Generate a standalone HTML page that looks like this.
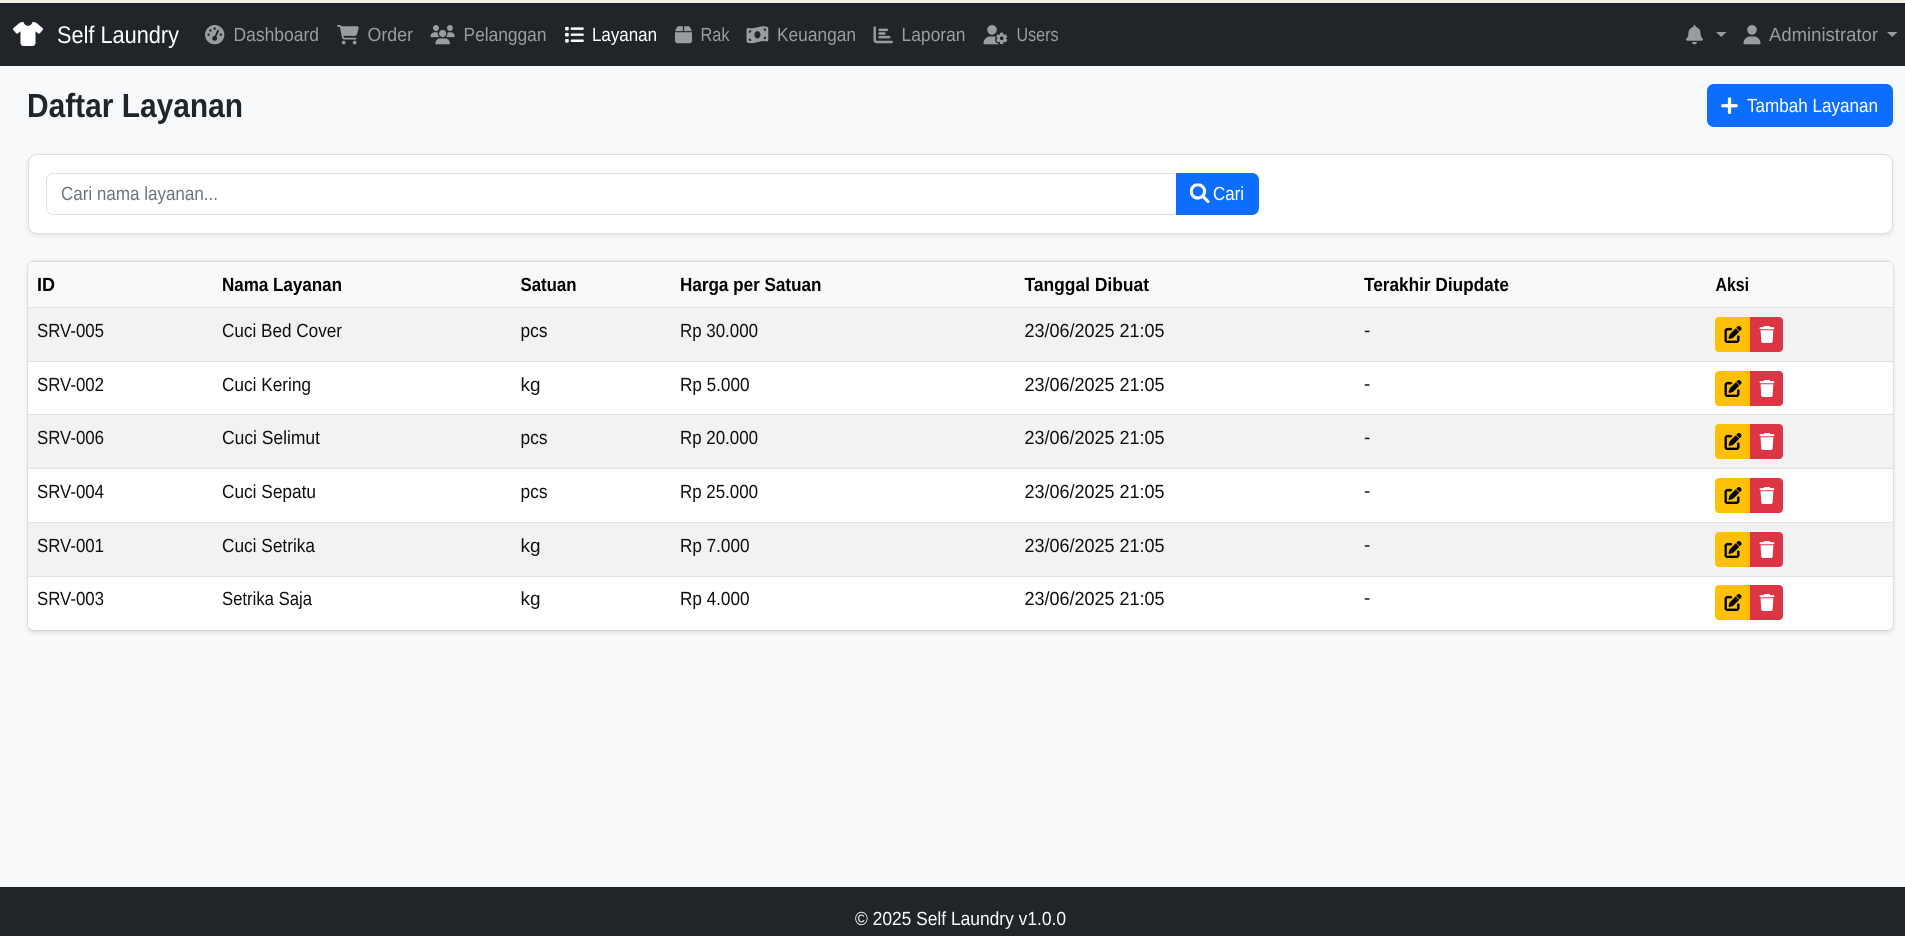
<!DOCTYPE html>
<html lang="id">
<head>
<meta charset="utf-8">
<title>Daftar Layanan - Self Laundry</title>
<style>
html,body{margin:0;padding:0;width:1905px;height:936px;overflow:hidden;background:#f8f9fa}
.b{position:absolute;box-sizing:border-box}
svg.o{position:absolute;left:0;top:0;width:1905px;height:936px}
svg text{font-family:"Liberation Sans",sans-serif;font-size:19px;fill:#0d0f11;text-rendering:geometricPrecision}
.n{fill:#9a9c9e}
.w{fill:#fff}
.th{font-weight:700;fill:#000}
.i{fill:#9a9c9e}
</style>
</head>
<body>
<div class="b" style="left:0;top:0;width:1905px;height:3px;background:#eff0e2"></div>
<div class="b" style="left:0;top:3px;width:1905px;height:63px;background:#212529"></div>

<div class="b" style="left:1707px;top:84px;width:186px;height:43px;background:#0d6efd;border-radius:7px"></div>

<div class="b" style="left:28px;top:154px;width:1865px;height:80px;background:#fff;border:1px solid #dcdfe2;border-radius:9px;box-shadow:0 2px 5px rgba(0,0,0,.09)"></div>
<div class="b" style="left:46px;top:173px;width:1131px;height:42px;background:#fff;border:1px solid #dee2e6;border-radius:7px 0 0 7px"></div>
<div class="b" style="left:1176px;top:173px;width:83px;height:42px;background:#0d6efd;border-radius:0 7px 7px 0"></div>

<div class="b" style="left:28px;top:261px;width:1865px;height:369px;background:#fff;border-radius:6px;box-shadow:0 2px 5px rgba(0,0,0,.14),0 0 1px rgba(0,0,0,.3);overflow:hidden">
  <div class="b" style="left:0;top:0;width:1865px;height:47px;background:#f8f9fa;border-top:1px solid #d9dcdf;border-bottom:1px solid #dee2e6"></div>
  <div class="b" style="left:0;top:47px;width:1865px;height:54px;background:#f2f2f2;border-bottom:1px solid #dee2e6"></div>
  <div class="b" style="left:0;top:101px;width:1865px;height:53px;background:#fff;border-bottom:1px solid #dee2e6"></div>
  <div class="b" style="left:0;top:154px;width:1865px;height:54px;background:#f2f2f2;border-bottom:1px solid #dee2e6"></div>
  <div class="b" style="left:0;top:208px;width:1865px;height:54px;background:#fff;border-bottom:1px solid #dee2e6"></div>
  <div class="b" style="left:0;top:262px;width:1865px;height:54px;background:#f2f2f2;border-bottom:1px solid #dee2e6"></div>
  <div class="b" style="left:0;top:316px;width:1865px;height:53px;background:#fff"></div>
</div>

<div class="b" style="left:1715px;top:317px;width:35px;height:35px;background:#ffc107;border-radius:4px 0 0 4px"></div><div class="b" style="left:1750px;top:317px;width:33px;height:35px;background:#dc3545;border-radius:0 4px 4px 0"></div>
<div class="b" style="left:1715px;top:371px;width:35px;height:35px;background:#ffc107;border-radius:4px 0 0 4px"></div><div class="b" style="left:1750px;top:371px;width:33px;height:35px;background:#dc3545;border-radius:0 4px 4px 0"></div>
<div class="b" style="left:1715px;top:424px;width:35px;height:35px;background:#ffc107;border-radius:4px 0 0 4px"></div><div class="b" style="left:1750px;top:424px;width:33px;height:35px;background:#dc3545;border-radius:0 4px 4px 0"></div>
<div class="b" style="left:1715px;top:478px;width:35px;height:35px;background:#ffc107;border-radius:4px 0 0 4px"></div><div class="b" style="left:1750px;top:478px;width:33px;height:35px;background:#dc3545;border-radius:0 4px 4px 0"></div>
<div class="b" style="left:1715px;top:532px;width:35px;height:35px;background:#ffc107;border-radius:4px 0 0 4px"></div><div class="b" style="left:1750px;top:532px;width:33px;height:35px;background:#dc3545;border-radius:0 4px 4px 0"></div>
<div class="b" style="left:1715px;top:585px;width:35px;height:35px;background:#ffc107;border-radius:4px 0 0 4px"></div><div class="b" style="left:1750px;top:585px;width:33px;height:35px;background:#dc3545;border-radius:0 4px 4px 0"></div>

<div class="b" style="left:0;top:887px;width:1905px;height:49px;background:#212529"></div>

<svg class="o" viewBox="0 0 1905 936" xmlns="http://www.w3.org/2000/svg">
<defs>
<symbol id="edit" viewBox="0 0 512 512"><path stroke="#000" stroke-width="14" d="M471.6 21.7c-21.9-21.9-57.3-21.9-79.2 0L362.3 51.7l97.9 97.9 30.1-30.1c21.9-21.9 21.9-57.3 0-79.2L471.6 21.7zm-299.2 220c-6.1 6.1-10.8 13.6-13.5 21.9l-29.6 88.8c-2.9 8.6-.6 18.1 5.8 24.6s15.9 8.7 24.6 5.8l88.8-29.6c8.2-2.7 15.7-7.4 21.9-13.5L437.7 172.3 339.7 74.3 172.4 241.7zM96 64C43 64 0 107 0 160V416c0 53 43 96 96 96H352c53 0 96-43 96-96V320c0-17.7-14.3-32-32-32s-32 14.3-32 32v96c0 17.7-14.3 32-32 32H96c-17.7 0-32-14.3-32-32V160c0-17.7 14.3-32 32-32h96c17.7 0 32-14.3 32-32s-14.3-32-32-32H96z"/></symbol>
<symbol id="trash" viewBox="0 0 448 512"><path fill="#fff" d="M135.2 17.7L128 32H32C14.3 32 0 46.3 0 64S14.3 96 32 96H416c17.7 0 32-14.3 32-32s-14.3-32-32-32H320l-7.2-14.3C307.4 6.8 296.3 0 284.2 0H163.8c-12.1 0-23.2 6.8-28.6 17.7zM416 128H32L53.2 467c1.6 25.3 22.6 45 47.9 45H346.9c25.3 0 46.3-19.7 47.9-45L416 128z"/></symbol>
</defs>

<!-- brand -->
<svg x="13" y="22" width="30" height="24" viewBox="0 0 640 512"><path fill="#fff" d="M211.8 0c7.8 0 14.3 5.7 16.7 13.2C240.8 51.9 277.1 80 320 80s79.2-28.1 91.5-66.8C413.9 5.7 420.4 0 428.2 0h12.6c22.5 0 44.2 7.9 61.5 22.3L628.5 127.4c6.6 5.5 10.7 13.5 11.4 22.1s-2.1 17.1-7.8 23.6l-56 64c-11.4 13.1-31.2 14.6-44.6 3.5L480 197.7V448c0 35.3-28.7 64-64 64H224c-35.3 0-64-28.7-64-64V197.7l-51.5 42.9c-13.3 11.1-33.1 9.6-44.6-3.5l-56-64c-5.7-6.5-8.5-15-7.8-23.6s4.8-16.6 11.4-22.1L137.7 22.3C155 7.9 176.7 0 199.2 0h12.6z"/></svg>
<text x="57" y="43" class="w" style="font-size:24px" textLength="122" lengthAdjust="spacingAndGlyphs">Self Laundry</text>

<!-- nav icons -->
<svg x="205" y="25" width="19.4" height="19.4" viewBox="0 0 512 512"><path class="i" d="M0 256a256 256 0 1 1 512 0A256 256 0 1 1 0 256zM288 96a32 32 0 1 0 -64 0 32 32 0 1 0 64 0zM256 416c35.3 0 64-28.7 64-64c0-17.4-6.9-33.1-18.1-44.6L366 161.7c5.3-12.1-.2-26.3-12.3-31.6s-26.3 .2-31.6 12.3L257.9 288c-.6 0-1.3 0-1.9 0c-35.3 0-64 28.7-64 64s28.7 64 64 64zM176 144a32 32 0 1 0 -64 0 32 32 0 1 0 64 0zM96 288a32 32 0 1 0 0-64 32 32 0 1 0 0 64zm352-32a32 32 0 1 0 -64 0 32 32 0 1 0 64 0z"/></svg>
<svg x="337" y="25" width="21.9" height="19.4" viewBox="0 0 576 512"><path class="i" d="M0 24C0 10.7 10.7 0 24 0H69.5c22 0 41.5 12.8 50.6 32h411c26.3 0 45.5 25 38.6 50.4l-41 152.3c-8.5 31.4-37 53.3-69.5 53.3H170.7l5.4 28.5c2.2 11.3 12.1 19.5 23.6 19.5H488c13.3 0 24 10.7 24 24s-10.7 24-24 24H199.7c-34.6 0-64.3-24.6-70.7-58.5L77.4 54.5c-.7-3.8-4-6.5-7.9-6.5H24C10.7 48 0 37.3 0 24zM128 464a48 48 0 1 1 96 0 48 48 0 1 1 -96 0zm336-48a48 48 0 1 1 0 96 48 48 0 1 1 0-96z"/></svg>
<svg x="430.5" y="25" width="24.3" height="19.4" viewBox="0 0 640 512"><path class="i" d="M144 0a80 80 0 1 1 0 160A80 80 0 1 1 144 0zM512 0a80 80 0 1 1 0 160A80 80 0 1 1 512 0zM0 298.7C0 239.8 47.8 192 106.7 192h42.7c15.9 0 31 3.5 44.6 9.7c-1.3 7.2-1.9 14.7-1.9 22.3c0 38.2 16.8 72.5 43.3 96c-.2 0-.4 0-.7 0H21.3C9.6 320 0 310.4 0 298.7zM405.3 320c-.2 0-.4 0-.7 0c26.6-23.5 43.3-57.8 43.3-96c0-7.6-.7-15-1.9-22.3c13.6-6.3 28.7-9.7 44.6-9.7h42.7C592.2 192 640 239.8 640 298.7c0 11.8-9.6 21.3-21.3 21.3H405.3zM224 224a96 96 0 1 1 192 0 96 96 0 1 1 -192 0zM128 485.3C128 411.7 187.7 352 261.3 352H378.7C452.3 352 512 411.7 512 485.3c0 14.7-11.9 26.7-26.7 26.7H154.7c-14.7 0-26.7-11.9-26.7-26.7z"/></svg>
<svg x="564.5" y="25" width="19.4" height="19.4" viewBox="0 0 512 512"><path fill="#fff" d="M40 48C26.7 48 16 58.7 16 72v48c0 13.3 10.7 24 24 24H88c13.3 0 24-10.7 24-24V72c0-13.3-10.7-24-24-24H40zM192 64c-17.7 0-32 14.3-32 32s14.3 32 32 32H480c17.7 0 32-14.3 32-32s-14.3-32-32-32H192zm0 160c-17.7 0-32 14.3-32 32s14.3 32 32 32H480c17.7 0 32-14.3 32-32s-14.3-32-32-32H192zm0 160c-17.7 0-32 14.3-32 32s14.3 32 32 32H480c17.7 0 32-14.3 32-32s-14.3-32-32-32H192zM16 232v48c0 13.3 10.7 24 24 24H88c13.3 0 24-10.7 24-24V232c0-13.3-10.7-24-24-24H40c-13.3 0-24 10.7-24 24zM40 368c-13.3 0-24 10.7-24 24v48c0 13.3 10.7 24 24 24H88c13.3 0 24-10.7 24-24V392c0-13.3-10.7-24-24-24H40z"/></svg>
<svg x="675" y="25" width="17" height="19.4" viewBox="0 0 448 512"><path class="i" d="M50.7 58.5L0 160H208V32H93.7C75.5 32 58.9 42.3 50.7 58.5zM240 160H448L397.3 58.5C389.1 42.3 372.5 32 354.3 32H240V160zm208 32H0V416c0 35.3 28.7 64 64 64H384c35.3 0 64-28.7 64-64V192z"/></svg>
<svg x="746.5" y="25" width="21.9" height="19.4" viewBox="0 0 576 512"><path class="i" d="M0 112.5V422.3c0 18 10.1 35 27 41.3c87 32.5 174 10.3 261-11.9c79.8-20.3 159.6-40.7 239.3-18.9c23 6.3 48.7-9.5 48.7-33.4V89.7c0-18-10.1-35-27-41.3C462 15.9 375 38.1 288 60.3C208.2 80.6 128.4 100.9 48.7 79.1C25.6 72.8 0 88.6 0 112.5zM288 352c-44.2 0-80-43-80-96s35.8-96 80-96s80 43 80 96s-35.8 96-80 96zM64 352c35.3 0 64 28.7 64 64H64V352zm64-208c0 35.3-28.7 64-64 64V144h64zM512 304v64H448c0-35.3 28.7-64 64-64zM448 96h64v64c-35.3 0-64-28.7-64-64z"/></svg>
<svg x="873.5" y="25" width="19.4" height="19.4" viewBox="0 0 512 512"><path class="i" d="M32 32c17.7 0 32 14.3 32 32V400c0 8.8 7.2 16 16 16H480c17.7 0 32 14.3 32 32s-14.3 32-32 32H80c-44.2 0-80-35.8-80-80V64C0 46.3 14.3 32 32 32zm96 96c0-17.7 14.3-32 32-32l192 0c17.7 0 32 14.3 32 32s-14.3 32-32 32l-192 0c-17.7 0-32-14.3-32-32zm32 64H288c17.7 0 32 14.3 32 32s-14.3 32-32 32H160c-17.7 0-32-14.3-32-32s14.3-32 32-32zm0 96H416c17.7 0 32 14.3 32 32s-14.3 32-32 32H160c-17.7 0-32-14.3-32-32s14.3-32 32-32z"/></svg>
<svg x="983.5" y="25" width="24.3" height="19.4" viewBox="0 0 640 512"><path class="i" d="M224 0a128 128 0 1 1 0 256A128 128 0 1 1 224 0zM178.3 304h91.4c11.8 0 23.4 1.2 34.5 3.3c-2.1 18.5 7.4 35.6 21.8 44.8c-16.6 10.6-26.7 31.6-20 53.3c4 12.9 9.4 25.5 16.4 37.6s15.2 23.1 24.4 33c15.7 16.9 39.6 18.4 57.2 8.7v.9c0 9.2 2.7 18.5 7.9 26.3H29.7C13.3 512 0 498.7 0 482.3C0 383.8 79.8 304 178.3 304zM436 218.2c0-7 4.5-13.3 11.3-14.8c10.5-2.4 21.5-3.7 32.7-3.7s22.2 1.3 32.7 3.7c6.8 1.5 11.3 7.8 11.3 14.8v30.6c7.9 3.4 15.4 7.7 22.3 12.8l24.9-14.3c6.1-3.5 13.7-2.7 18.5 2.4c7.6 8.1 14.3 17.2 20.1 27.2s10.3 20.4 13.5 31c2.1 6.7-1.1 13.7-7.2 17.2l-25 14.4c.4 4 .7 8.1 .7 12.3s-.2 8.2-.7 12.3l25 14.4c6.1 3.5 9.2 10.5 7.2 17.2c-3.3 10.6-7.8 21-13.5 31s-12.5 19.1-20.1 27.2c-4.8 5.1-12.5 5.9-18.5 2.4l-24.9-14.3c-6.9 5.1-14.3 9.4-22.3 12.8l0 30.6c0 7-4.5 13.3-11.3 14.8c-10.5 2.4-21.5 3.7-32.7 3.7s-22.2-1.3-32.7-3.7c-6.8-1.5-11.3-7.8-11.3-14.8V454.8c-8-3.4-15.6-7.7-22.5-12.9l-24.7 14.3c-6.1 3.5-13.7 2.7-18.5-2.4c-7.6-8.1-14.3-17.2-20.1-27.2s-10.3-20.4-13.5-31c-2.1-6.7 1.1-13.7 7.2-17.2l24.8-14.3c-.4-4.1-.7-8.2-.7-12.4s.3-8.3 .7-12.4L343.8 325c-6.1-3.5-9.2-10.5-7.2-17.2c3.3-10.6 7.7-21 13.5-31s12.5-19.1 20.1-27.2c4.8-5.1 12.4-5.9 18.5-2.4l24.8 14.3c6.9-5.1 14.5-9.4 22.5-12.9V218.2zm92.1 133.5a48.1 48.1 0 1 0 -96.1 0 48.1 48.1 0 1 0 96.1 0z"/></svg>

<!-- nav text -->
<text x="233.5" y="41" class="n" textLength="85.5" lengthAdjust="spacingAndGlyphs">Dashboard</text>
<text x="367.5" y="41" class="n" textLength="45.5" lengthAdjust="spacingAndGlyphs">Order</text>
<text x="463.5" y="41" class="n" textLength="83" lengthAdjust="spacingAndGlyphs">Pelanggan</text>
<text x="592" y="41" class="w" textLength="65" lengthAdjust="spacingAndGlyphs">Layanan</text>
<text x="700.5" y="41" class="n" textLength="29" lengthAdjust="spacingAndGlyphs">Rak</text>
<text x="777" y="41" class="n" textLength="79" lengthAdjust="spacingAndGlyphs">Keuangan</text>
<text x="901.5" y="41" class="n" textLength="64" lengthAdjust="spacingAndGlyphs">Laporan</text>
<text x="1016.5" y="41" class="n" textLength="42" lengthAdjust="spacingAndGlyphs">Users</text>

<!-- right nav -->
<svg x="1686" y="25" width="17" height="19.4" viewBox="0 0 448 512"><path class="i" d="M224 0c-17.7 0-32 14.3-32 32V51.2C119 66 64 130.6 64 208v18.8c0 47-17.3 92.4-48.5 127.6l-7.4 8.3c-8.4 9.4-10.4 22.9-5.3 34.4S19.4 416 32 416H416c12.6 0 24-7.4 29.2-18.9s3.1-25-5.3-34.4l-7.4-8.3C401.3 319.2 384 273.9 384 226.8V208c0-77.4-55-142-128-156.8V32c0-17.7-14.3-32-32-32zm45.3 493.3c12-12 18.7-28.3 18.7-45.3H224 160c0 17 6.7 33.3 18.7 45.3s28.3 18.7 45.3 18.7s33.3-6.7 45.3-18.7z"/></svg>
<polygon class="i" points="1716,32 1726.5,32 1721.25,37"/>
<svg x="1743.5" y="25" width="17" height="19.4" viewBox="0 0 448 512"><path class="i" d="M224 256A128 128 0 1 0 224 0a128 128 0 1 0 0 256zm-45.7 48C79.8 304 0 383.8 0 482.3C0 498.7 13.3 512 29.7 512H418.3c16.4 0 29.7-13.3 29.7-29.7C448 383.8 368.2 304 269.7 304H178.3z"/></svg>
<text x="1769" y="41" class="n" textLength="109" lengthAdjust="spacingAndGlyphs">Administrator</text>
<polygon class="i" points="1887,32 1897.5,32 1892.25,37"/>

<!-- heading -->
<text x="27" y="117" style="font-size:33.5px;font-weight:700;fill:#212529" textLength="216" lengthAdjust="spacingAndGlyphs">Daftar Layanan</text>

<!-- add button -->
<svg x="1721" y="96" width="17" height="19.4" viewBox="0 0 448 512"><path fill="#fff" stroke="#fff" stroke-width="22" d="M256 80c0-17.7-14.3-32-32-32s-32 14.3-32 32V224H48c-17.7 0-32 14.3-32 32s14.3 32 32 32H192V432c0 17.7 14.3 32 32 32s32-14.3 32-32V288H400c17.7 0 32-14.3 32-32s-14.3-32-32-32H256V80z"/></svg>
<text x="1747" y="112" class="w" textLength="131" lengthAdjust="spacingAndGlyphs">Tambah Layanan</text>

<!-- search -->
<text x="61" y="200" style="fill:#6c757d" textLength="157" lengthAdjust="spacingAndGlyphs">Cari nama layanan...</text>
<svg x="1190" y="183.5" width="19.4" height="19.4" viewBox="0 0 512 512"><path fill="#fff" stroke="#fff" stroke-width="18" d="M416 208c0 45.9-14.9 88.3-40 122.7L502.6 457.4c12.5 12.5 12.5 32.8 0 45.3s-32.8 12.5-45.3 0L330.7 376c-34.4 25.2-76.8 40-122.7 40C93.1 416 0 322.9 0 208S93.1 0 208 0S416 93.1 416 208zM208 352a144 144 0 1 0 0-288 144 144 0 1 0 0 288z"/></svg>
<text x="1213" y="200" class="w" textLength="31" lengthAdjust="spacingAndGlyphs">Cari</text>

<!-- table header -->
<text x="37" y="291" class="th" textLength="18" lengthAdjust="spacingAndGlyphs">ID</text>
<text x="222" y="291" class="th" textLength="120" lengthAdjust="spacingAndGlyphs">Nama Layanan</text>
<text x="520.5" y="291" class="th" textLength="56" lengthAdjust="spacingAndGlyphs">Satuan</text>
<text x="680" y="291" class="th" textLength="141.5" lengthAdjust="spacingAndGlyphs">Harga per Satuan</text>
<text x="1024.5" y="291" class="th" textLength="124.5" lengthAdjust="spacingAndGlyphs">Tanggal Dibuat</text>
<text x="1364" y="291" class="th" textLength="145" lengthAdjust="spacingAndGlyphs">Terakhir Diupdate</text>
<text x="1715.5" y="291" class="th" textLength="33.5" lengthAdjust="spacingAndGlyphs">Aksi</text>

<!-- row 1 -->
<text x="37" y="337" textLength="67" lengthAdjust="spacingAndGlyphs">SRV-005</text>
<text x="222" y="337" textLength="120" lengthAdjust="spacingAndGlyphs">Cuci Bed Cover</text>
<text x="520.5" y="337" textLength="27" lengthAdjust="spacingAndGlyphs">pcs</text>
<text x="680" y="337" textLength="78" lengthAdjust="spacingAndGlyphs">Rp 30.000</text>
<text x="1024.5" y="337" textLength="140" lengthAdjust="spacingAndGlyphs">23/06/2025 21:05</text>
<text x="1364" y="336.5">-</text>
<!-- row 2 -->
<text x="37" y="391" textLength="67" lengthAdjust="spacingAndGlyphs">SRV-002</text>
<text x="222" y="391" textLength="89" lengthAdjust="spacingAndGlyphs">Cuci Kering</text>
<text x="520.5" y="391" textLength="20" lengthAdjust="spacingAndGlyphs">kg</text>
<text x="680" y="391" textLength="69.5" lengthAdjust="spacingAndGlyphs">Rp 5.000</text>
<text x="1024.5" y="391" textLength="140" lengthAdjust="spacingAndGlyphs">23/06/2025 21:05</text>
<text x="1364" y="390">-</text>
<!-- row 3 -->
<text x="37" y="444.2" textLength="67" lengthAdjust="spacingAndGlyphs">SRV-006</text>
<text x="222" y="444.2" textLength="98" lengthAdjust="spacingAndGlyphs">Cuci Selimut</text>
<text x="520.5" y="444.2" textLength="27" lengthAdjust="spacingAndGlyphs">pcs</text>
<text x="680" y="444.2" textLength="78" lengthAdjust="spacingAndGlyphs">Rp 20.000</text>
<text x="1024.5" y="444.2" textLength="140" lengthAdjust="spacingAndGlyphs">23/06/2025 21:05</text>
<text x="1364" y="443.7">-</text>
<!-- row 4 -->
<text x="37" y="497.8" textLength="67" lengthAdjust="spacingAndGlyphs">SRV-004</text>
<text x="222" y="497.8" textLength="94" lengthAdjust="spacingAndGlyphs">Cuci Sepatu</text>
<text x="520.5" y="497.8" textLength="27" lengthAdjust="spacingAndGlyphs">pcs</text>
<text x="680" y="497.8" textLength="78" lengthAdjust="spacingAndGlyphs">Rp 25.000</text>
<text x="1024.5" y="497.8" textLength="140" lengthAdjust="spacingAndGlyphs">23/06/2025 21:05</text>
<text x="1364" y="497">-</text>
<!-- row 5 -->
<text x="37" y="552" textLength="67" lengthAdjust="spacingAndGlyphs">SRV-001</text>
<text x="222" y="552" textLength="93" lengthAdjust="spacingAndGlyphs">Cuci Setrika</text>
<text x="520.5" y="552" textLength="20" lengthAdjust="spacingAndGlyphs">kg</text>
<text x="680" y="552" textLength="69.5" lengthAdjust="spacingAndGlyphs">Rp 7.000</text>
<text x="1024.5" y="552" textLength="140" lengthAdjust="spacingAndGlyphs">23/06/2025 21:05</text>
<text x="1364" y="551">-</text>
<!-- row 6 -->
<text x="37" y="605" textLength="67" lengthAdjust="spacingAndGlyphs">SRV-003</text>
<text x="222" y="605" textLength="90" lengthAdjust="spacingAndGlyphs">Setrika Saja</text>
<text x="520.5" y="605" textLength="20" lengthAdjust="spacingAndGlyphs">kg</text>
<text x="680" y="605" textLength="69.5" lengthAdjust="spacingAndGlyphs">Rp 4.000</text>
<text x="1024.5" y="605" textLength="140" lengthAdjust="spacingAndGlyphs">23/06/2025 21:05</text>
<text x="1364" y="604">-</text>

<!-- action icons -->
<use href="#edit" x="1724.5" y="326" width="17" height="17"/><use href="#trash" x="1759.5" y="326" width="14.9" height="17"/>
<use href="#edit" x="1724.5" y="380" width="17" height="17"/><use href="#trash" x="1759.5" y="380" width="14.9" height="17"/>
<use href="#edit" x="1724.5" y="433" width="17" height="17"/><use href="#trash" x="1759.5" y="433" width="14.9" height="17"/>
<use href="#edit" x="1724.5" y="487" width="17" height="17"/><use href="#trash" x="1759.5" y="487" width="14.9" height="17"/>
<use href="#edit" x="1724.5" y="541" width="17" height="17"/><use href="#trash" x="1759.5" y="541" width="14.9" height="17"/>
<use href="#edit" x="1724.5" y="594" width="17" height="17"/><use href="#trash" x="1759.5" y="594" width="14.9" height="17"/>

<!-- footer -->
<text x="855" y="925" style="fill:#f8f9fa" textLength="211" lengthAdjust="spacingAndGlyphs">© 2025 Self Laundry v1.0.0</text>
</svg>
</body>
</html>
